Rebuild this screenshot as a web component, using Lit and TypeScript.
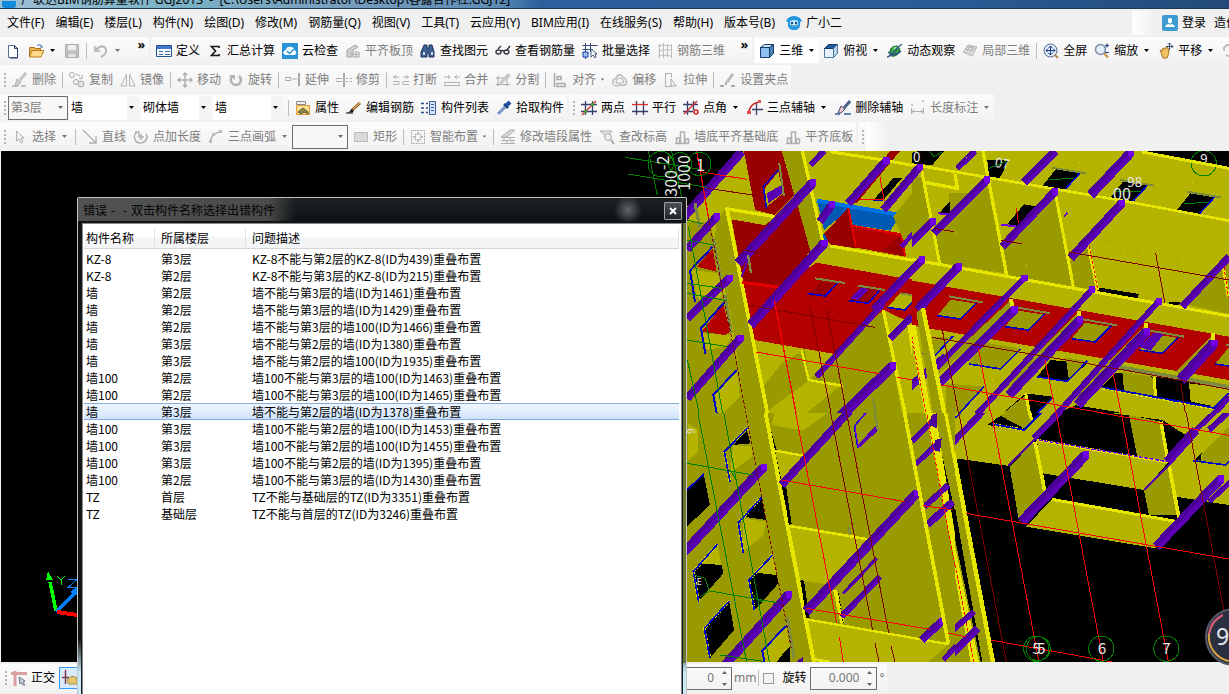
import { LitElement, html, svg, css, nothing } from "lit";
import { customElement, property } from "lit/decorators.js";
import { classMap } from "lit/directives/class-map.js";

/* ---------- icons, each drawn on a 16 x 16 grid ---------- */
const stroke = (d: string, color: string, w = 1) =>
  svg`<path d=${d} fill="none" stroke=${color} stroke-width=${w} />`;
const fill = (d: string, color: string, line = "none") =>
  svg`<path d=${d} fill=${color} stroke=${line} />`;
const G = "#a9a9a9";
const L = "#c9c9c9";

const ICONS: Record<string, unknown> = {
  fresh: svg`${fill("M3.500 2.500h6l3 3v9h-9z", "#fff", "#5b6f94")}${fill("M9.500 2.500v3h3z", "#c5d6ee", "#27406f")}${stroke("M12.500 6v9H5", "#1f3b70", 1)}`,
  open: svg`${fill("M1.500 4.500h5l1 1h5v8h-11z", "#e9b54d", "#a8701a")}${fill("M4 7.500h12l-3 6.500H1.500z", "#ffd98a", "#b87d22")}${stroke("M9 2.500q4-2 5 1.500m-2 0h3", "#3f6db0", 1)}`,
  save: svg`${fill("M1.500 1.500h13v13h-13z", "#c3c3c3", "#adadad")}${fill("M4 2h8v5H4z", "#efefef")}${fill("M4 10h8v4.500H4z", "#e2e2e2", "#b0b0b0")}`,
  undo: svg`${stroke("M4 6c5-5 10-2 9 3q-1 3-5 5", "#b9b9b9", 2)}${fill("M1 2v7h7z", "#bdbdbd")}`,
  define: svg`${fill("M.5 2.500h15v11H.5z", "#f3f8ff", "#28519c")}${fill("M1 3h14v3H1z", "#4378c8")}${stroke("M3 8.500h4m2 0h5M3 11.500h4m2 0h5", "#476aa8", 1)}`,
  sigma: svg`${stroke("M12 5V3.500H4.500L8.500 8l-4 4.500H12V11", "#151515", 1.600)}`,
  cloud: svg`${fill("M0 0h16v16H0z", "#2a93d8")}${fill("M4 12q-4-1-2-4 1-1 2-1 1-4 5-3 3 0 3 3 3 1 2 4-1 1-2 1z", "#fff")}${stroke("M5 8l2.500 2.500L12 6", "#2a93d8", 1.500)}`,
  align: svg`${fill("M2 14V7l8-5 3 2-6 4v6z", "#cfcfcf", G)}${stroke("M8 9h6v5H8zm0 2.500h6m-3-2.500v5", G, 1)}`,
  find: svg`${fill("M4 2h3v3h2V2h3l2 7v5H9v-4H7v4H1V9z", "#3d5f94", "#1e3560")}${fill("M3 9h2v3H3zm8 0h2v3h-2z", "#c6d9f2")}`,
  glasses: svg`${stroke("M1 9a2.500 2 0 1 0 5 0a2.500 2 0 1 0-5 0m8 0a2.500 2 0 1 0 5 0a2.500 2 0 1 0-5 0M6 8q1.500-1 3 0M3 6l3-3m6 4 3-4", "#30343c", 1.400)}`,
  batch: svg`${stroke("M.5 2.500h15M.5 6.500h10M3.500 0v16M8.500 0v9M.5 10.500h6", "#394d78", 1)}${fill("M1 9h5v5H1z", "#9fc1ec", "#1941b0")}${fill("M9 6v8l2-2 2 3 1-1-1-3h2z", "#fff", "#445a80")}`,
  steel3d: svg`${stroke("M1 3l5-1 9 1M1 8l5-1h9M1 13l5-1 9 1M2.500 1v14M6.500 0v15M10.500 1v13M14.500 1v14", "#bdbdbd", 1)}`,
  cube: svg`${fill("M1.500 4.500h9v10h-9z", "#8ec1f0", "#173a68")}${fill("M1.500 4.500l4-3h9l-4 3z", "#cbe5fb", "#173a68")}${fill("M10.500 4.500l4-3v9l-4 4z", "#4c82b8", "#173a68")}`,
  topview: svg`${fill("M1.500 5.500h9v9h-9z", "#e3f1fc", "#54779f")}${fill("M1.500 5.500l4-4h9l-4 4z", "#1e5c9a", "#173a68")}${fill("M10.500 5.500l4-4v9l-4 4z", "#bcd8f1", "#54779f")}`,
  orbit: svg`${fill("M3 8q1-5 7-5 5 3 1 8-5 4-8 1z", "#2ca345", "#116226")}${stroke("M0 14q4-1 8-6t7-7M1 9q6 6 13-1", "#36508c", 1.300)}${fill("M6 5q2-2 4-1L7 7z", "#92e49a")}`,
  local3d: svg`${fill("M1 9l5-7 9 2-5 9z", "#e2e2e2", "#b3b3b3")}${stroke("M3 6l10 2M5 3.500l8.500 2M4 10l5-8M7 11l5-8", "#b3b3b3", 1)}`,
  full: svg`<circle cx="7.500" cy="7.500" r="6.500" fill="#e6f0fc" stroke="#53698c" />${stroke("M3 7.500h9M7.500 3v9M5.500 5L7.500 3l2 2m-4 5 2 2 2-2M5 5.500l-2 2 2 2m5-4 2 2-2 2", "#1b3d85", 1)}${stroke("M12 12l3 3", "#b98a4a", 2)}`,
  zoom: svg`<circle cx="6.500" cy="6.500" r="5" fill="#e3f0fc" stroke="#7c8ea8" stroke-width="1.500" />${stroke("M10 10l4 4.500", "#c79b55", 2.500)}${stroke("M11 2.500h4m-2-2v4m-2 5h4", "#1f4590", 1.200)}`,
  pan: svg`${fill("M2 7l2 1 1-3 2 1 1-2 2 1 1 5-2 5H5z", "#f0c264", "#a97320")}${stroke("M11.500 0v7M8 3.500h7M10 1.500 11.500 0 13 1.500M13.500 2 15 3.500 13.500 5", "#36486d", 1)}`,
  swirl: svg`${stroke("M2 8V5l3-3h8v6M13 10q-4 5-9 2", "#bdbdbd", 2)}`,
  brush: svg`${stroke("M14 1L8 8", "#c4c4c4", 3)}${fill("M5 7l4 3-3 4H3z", "#d0d0d0", "#b0b0b0")}${stroke("M0 14h5m4 0h5", "#b0b0b0", 1.500)}`,
  copy: svg`<circle cx="3" cy="3" r="2.500" fill="none" stroke=${G} /><circle cx="7" cy="10" r="2.500" fill="none" stroke=${G} /><circle cx="12" cy="12" r="3" fill="#e4e4e4" stroke=${G} />${stroke("M7 2l4 2m2-1v4l-3-1", G)}`,
  mirror: svg`${stroke("M6.500 2v12H1zM9.500 2v12H15z", "#b5b5b5", 1)}`,
  move: svg`${stroke("M8 1v14M1 8h14M6 3l2-2 2 2M6 13l2 2 2-2M3 6L1 8l2 2m10-4 2 2-2 2", "#b0b0b0", 1.500)}`,
  rotate: svg`${stroke("M4 4C1 8 4 13 8 13s7-5 3-9", "#b5b5b5", 2.500)}${fill("M1 3h6v5z", "#b5b5b5")}`,
  extend: svg`${stroke("M0 5.500h6v3H0zM8 7h4", G, 1)}${stroke("M14 1v13", G, 2)}`,
  trim: svg`${stroke("M8 1v14", G, 2)}${stroke("M0 6.500h6m-6 3h6m4-3h2m2 0h2m-6 3h2m2 0h2", G, 1)}`,
  cut: svg`${stroke("M0 5h6M3 3L1 5l2 2m7-2h6m-3-2 2 2-2 2M0 9.500h6v3H0m16-3h-6v3h6", "#b0b0b0", 1)}`,
  merge: svg`${stroke("M0 5h6M4 3l2 2-2 2m6-2h6m-3-2-2 2 2 2M0 10.500h16v3H0z", "#b0b0b0", 1)}`,
  split: svg`${stroke("M1 6h12l2-3M1 12.500h14M3 4v10m9-7v7", G, 1)}${stroke("M5 12l9-10", L, 3)}`,
  alignto: svg`${stroke("M2.500 1v14M5 4.500h4v3H5zM5 11.500h8v3H5z", G, 1.500)}`,
  offset: svg`${stroke("M1 12q-1-4 3-6 3-6 7-1 5 3 3 7-2 2-6 1-5 2-7-1z", "#b2b2b2", 1.300)}${stroke("M4 11q0-5 4-5 4 1 4 4-3 2-8 1z", G, 1)}`,
  stretch: svg`${stroke("M2.500 14.500v-13h6v4m-6 9h6", "#b0b0b0", 1)}${stroke("M8 7l5 7H8z", G, 1)}`,
  grip: svg`${stroke("M13 2L7 10", "#bdbdbd", 3)}${stroke("M0 14h4m7 0h4M6 10v3", G, 2)}`,
  props: svg`${fill("M1.500 5.500h13v9h-13z", "#ffdf94", "#e09a35")}${fill("M1.500 1.500h9v3h-9z", "#f0f0f0", "#8a8a8a")}${fill("M3 12l5-4 5 4v2l-4-2-3 2z", "#8a8b4a", "#5b5630")}`,
  pencil: svg`${stroke("M0 13h7", "#222", 1.200)}${stroke("M5 11l9-8", "#8b5a20", 3)}${stroke("M7 9l7-6", "#efcb78", 1)}${fill("M2 13l4-4 2 3z", "#222")}`,
  list: svg`${stroke("M0 3.500h3M0 8h3m-3 4.500h3M5 3.500h2M5 8h2m-2 4.500h2", "#2b4b8a", 1.300)}${fill("M8.500 1.500h6v13h-6z", "#d5e6fa", "#3c5f9e")}${stroke("M10 4.500h3m-3 3h3m-3 3h3", "#3c5f9e", 1)}`,
  picker: svg`${stroke("M2 14L9 7", "#7b98c8", 3)}${stroke("M8 4l4 4", "#183c7c", 2.500)}${stroke("M10 6l4-4", "#1d4fa0", 4)}`,
  twopoint: svg`${stroke("M4.500 1v14M11.500 1v14M0 4.500h16M0 11.500h16", "#36406a", 1.300)}${stroke("M1 15L15 1", "#cf3030", 1.300)}${fill("M3 10h3v3H3zM10 3h3v3h-3z", "#4d9a35")}`,
  parallel: svg`${stroke("M4.500 1v14M11.500 1v14M0 11.500h16", "#36406a", 1.300)}${stroke("M0 4.500h16", "#cf3030", 1.300)}`,
  angle: svg`${stroke("M4.500 1v14M10.500 1v9M0 4.500h15M0 11.500h10", "#36406a", 1.300)}${stroke("M1 14L14 1", "#cf3030", 1.500)}<circle cx="13" cy="12" r="2" fill="none" stroke="#d02020" stroke-width="1.500" />`,
  threepoint: svg`${stroke("M9.500 3v12M5 9.500h11", "#36406a", 1.300)}${stroke("M2 13Q2 4 12 2", "#d02020", 1.500)}${fill("M0 11h4v3H0zM11 0h3v3h-3z", "#e05050")}`,
  eraser: svg`${stroke("M15 1L9 8", "#4c628f", 3)}${fill("M6 6l4 3-4 4H3z", "#f5c6d0", "#3a4a74")}${stroke("M0 14h5m4 0h7", "#345a9e", 1.500)}`,
  dim: svg`${stroke("M1.500 8v6M13.500 8v6M2 11.500h11M4 9.500l-2 2 2 2m7-4 2 2-2 2", "#b0b0b0", 1)}${fill("M1 4h2v2H1zM12 0h2v2h-2z", "#c8c8c8")}`,
  pointer: svg`${fill("M4.500 2v10l2.500-2 2 4 2-1-2-4h3z", "#f3f3f3", "#b0b0b0")}`,
  line: svg`${stroke("M1 1l12 12M7 14h7V7", "#b0b0b0", 1.300)}`,
  pointlen: svg`${stroke("M4 3C-1 7 2 14 7 14s9-5 6-9M8 5v6M5 8h6M2 3h4v4", "#b0b0b0", 1.500)}`,
  arc: svg`${stroke("M3 14Q2 4 13 3", "#b0b0b0", 1.500)}${fill("M1 11h3v3H1zM11 1h3v3h-3zM4 4h3v3H4z", "#bbb")}`,
  rect: svg`${fill("M1.500 3.500h13v9h-13z", "#dadada", "#bcbcbc")}`,
  smart: svg`<path d="M1.500 1.500h13v13h-13z" fill="none" stroke="#a5a5a5" stroke-dasharray="2 1" />${stroke("M8 3v3m0 4v3M3 8h3m4 0h3M5 5l1 1m5-1-1 1M5 11l1-1m5 1-1-1", G, 1.500)}`,
  wallseg: svg`${stroke("M1 8.500h14M1 11.500h14M1 14.500h14M4 9v2m6-2v2M7 12v2m5-2v2", "#b0b0b0", 1)}${fill("M1 8l9-7h5L7 8z", "#d6d6d6", "#b0b0b0")}`,
  elev: svg`${fill("M1 2h12L8 8z", "#e6e6e6", "#b0b0b0")}<circle cx="9" cy="8" r="3.500" fill="#efefef" stroke="#a9a9a9" />${stroke("M12 11l3 4", G, 2)}`,
  base: svg`${stroke("M1 14.500h14M2.500 14V9h3v5m1 0V3h4v11m1 0v-4h3v4", "#b0b0b0", 1.500)}`,
  mascot: svg`${fill("M2 3q6-4 12 0l2 3-2 1q1 8-6 8T2 7L0 6z", "#2196dc")}${fill("M4 6q4-2 8 0 1 6-4 6T4 6z", "#bfe6fa")}${fill("M5 7h2v2H5zm4 0h2v2H9z", "#0d4f80")}${stroke("M5 10q3 3 6 0", "#0d6aa6")}`,
  user: svg`${fill("M2 0h12q2 0 2 2v12q0 2-2 2H2q-2 0-2-2V2q0-2 2-2z", "#3d9bcf")}${fill("M6 4q2-2 4 0v3q-2 3-4 0z", "#fff")}${fill("M3 12q1-3 4-3l1 1 1-1q3 0 4 3z", "#fff")}`,
  ortho: svg`${stroke("M4 1v15", "#dba0a0", 3)}${stroke("M0 3.500h16", "#dba0a0", 3)}${fill("M8 7l6 4-2 1 2 3-2 0-2-2-1 1z", "#c7ced6", "#6b7885")}`,
  snap: svg`${stroke("M4.500 0v14M1 7.500h7", "#7a3d46", 1.500)}${fill("M6 10l5-4 5 2v6H8z", "#e5c66b", "#a98b3c")}`,
};

/* ---------- toolbar model ---------- */
type Item =
  | { kind: "btn"; icon: string; text?: string; off?: boolean; menu?: boolean; on?: boolean; tight?: boolean }
  | { kind: "sep" }
  | { kind: "more" }
  | { kind: "combo"; text: string; size: string; boxed?: boolean };
const b = (icon: string, text = "", flags = ""): Item => ({
  kind: "btn", icon, text,
  off: flags.includes("off"), menu: flags.includes("menu"), on: flags.includes("active"), tight: flags.includes("tight"),
});
const sep: Item = { kind: "sep" };
const combo = (text: string, size: string, boxed = false): Item => ({ kind: "combo", text, size, boxed });

interface Bar { grip?: boolean; items: Item[]; grow?: boolean; tail?: boolean }
const ROWS: Bar[][] = [
  [
    { items: [b("fresh"), b("open", "", "menu"), b("save", "", "off"), sep, b("undo", "", "off menu"), { kind: "more" }] },
    { items: [b("define", "定义"), b("sigma", "汇总计算"), b("cloud", "云检查"), b("align", "平齐板顶", "off"), b("find", "查找图元"), b("glasses", "查看钢筋量"), b("batch", "批量选择"), b("steel3d", "钢筋三维", "off"), { kind: "more" }] },
    { grow: true, items: [b("cube", "三维", "menu active"), b("topview", "俯视", "menu"), b("orbit", "动态观察"), b("local3d", "局部三维", "off"), sep, b("full", "全屏"), b("zoom", "缩放", "menu"), b("pan", "平移", "menu"), b("swirl", "", "off")] },
  ],
  [
    { grip: true, items: [b("brush", "删除", "off"), sep, b("copy", "复制", "off"), b("mirror", "镜像", "off"), sep, b("move", "移动", "off"), b("rotate", "旋转", "off"), sep, b("extend", "延伸", "off"), b("trim", "修剪", "off"), sep, b("cut", "打断", "off"), b("merge", "合并", "off"), b("split", "分割", "off"), sep, b("alignto", "对齐", "off menu tight"), b("offset", "偏移", "off"), b("stretch", "拉伸", "off"), sep, b("grip", "设置夹点", "off")] },
  ],
  [
    { grip: true, items: [combo("第3层", "m", true), combo("墙", "l"), combo("砌体墙", "l"), combo("墙", "l"), sep, b("props", "属性"), b("pencil", "编辑钢筋"), b("list", "构件列表"), b("picker", "拾取构件")] },
    { grip: true, items: [b("twopoint", "两点"), b("parallel", "平行"), b("angle", "点角", "menu"), b("threepoint", "三点辅轴", "menu"), b("eraser", "删除辅轴"), b("dim", "长度标注", "off menu")] },
  ],
  [
    { grip: true, items: [b("pointer", "选择", "off menu"), sep, b("line", "直线", "off"), b("pointlen", "点加长度", "off"), b("arc", "三点画弧", "off menu"), combo("", "s", true), b("rect", "矩形", "off"), sep, b("smart", "智能布置", "off menu tight"), sep, b("wallseg", "修改墙段属性", "off"), b("elev", "查改标高", "off"), b("base", "墙底平齐基础底", "off"), b("base", "平齐底板", "off")] },
    { grip: true, tail: true, items: [] },
  ],
];

@customElement("tool-strip")
class ToolStrip extends LitElement {
  @property({ attribute: false }) bars: Bar[] = [];

  static styles = css`
    :host { display: flex; gap: 2px; overflow: hidden; }
    .bar { display: flex; flex: none; align-items: center; padding: 0 0 0 1px; border-radius: 2px;
      background: linear-gradient(#fcfcfc, #f1f1f1); }
    .gripped { padding-left: 4px; }
    .grow { flex: 1 0 auto; }
    .grip { width: 2px; height: 14px; margin-right: 2px; flex: none;
      background: repeating-linear-gradient(#b5b5b5 0 2px, transparent 2px 4px); }
    .tail { width: 24px; height: 100%; background: linear-gradient(90deg, #fff, #efefef); }
    button { display: flex; align-items: center; gap: 4px; height: 24px; padding: 0 3px 0 4px; border: 0;
      background: none; color: #000; font: inherit; white-space: nowrap; }
    button.off { color: #7d7d7d; }
    button.on { background: #fff; }
    button svg { flex: none; }
    .arrow { width: 7px; height: 4px; margin: 0 1px; }
    .tight .arrow { width: 5px; margin: 0; }
    .sep { width: 1px; height: 16px; margin: 0 2px 0 3px; background: #bdbdbd; }
    .more { box-sizing: border-box; width: 24px; padding-right: 4px; margin-bottom: 12px; font-weight: bold; text-align: right; }
    .combo { position: relative; display: flex; align-items: center; margin-right: 2px; background: #fff; }
    .combo svg { position: absolute; right: 4px; pointer-events: none; }
    select { appearance: none; height: 24px; margin: 0; padding: 0 0 0 2px; border: 0; border-radius: 0;
      background: linear-gradient(90deg, #fff calc(100% - 12px), #f4f4f4 0); color: #000; font: inherit; }
    .l select { width: 70px; }
    .m select { width: 60px; }
    .s select { width: 56px; }
    .boxed { margin-right: 1px; }
    .boxed select { border: 1px solid #6d6d6d; color: #7d7d7d; background: #f7f7f7; }
  `;

  private item(it: Item) {
    if (it.kind === "sep") return html`<span class="sep"></span>`;
    if (it.kind === "more") return html`<span class="more">»</span>`;
    if (it.kind === "combo")
      return html`<span class=${classMap({ combo: true, [it.size]: true, boxed: !!it.boxed })}>
        <select aria-label=${it.text || "弧半径"}><option>${it.text}</option></select>
        <svg width="7" height="4" viewBox="0 0 7 4"><path d="M1 0h5L3.500 3z" fill=${it.boxed ? "#6d6d6d" : "#000"} /></svg>
      </span>`;
    return html`<button class=${classMap({ off: !!it.off, on: !!it.on, tight: !!it.tight })} aria-label=${it.text || it.icon}>
      <svg width="16" height="16" viewBox="0 0 16 16">${ICONS[it.icon]}</svg>${it.text || nothing}
      ${it.menu ? html`<svg class="arrow" viewBox="0 0 7 4"><path d="M1 0h5L3.500 3z" fill=${it.off ? "#777" : "#000"} /></svg>` : nothing}
    </button>`;
  }

  render() {
    return this.bars.map((bar) => html`<div class=${classMap({ bar: true, grow: !!bar.grow, gripped: !!bar.grip })}>
      ${bar.grip ? html`<span class="grip"></span>` : nothing}
      ${bar.items.map((i) => this.item(i))}
      ${bar.tail ? html`<span class="tail"></span>` : nothing}
    </div>`);
  }
}

/* ---------- building model, four tiles drawn at three units per pixel ---------- */
const Y = "#b3b300", D = "#999900", H = "#e6e600", R = "#b30000", RD = "#990000";
const P = "#5900b3", PD = "#4d0099", PC = "#7300e6", K = "#000", B = "#0000c8", AX = "#ff0000", AD = "#800000", GR = "#008000", W = "#7d8c3c";

const p = (points: string, color: string) => svg`<polygon points=${points} fill=${color} />`;
const l = (points: string, color: string, w = 3, dash = "") =>
  svg`<polyline points=${points} fill="none" stroke=${color} stroke-width=${w} stroke-dasharray=${dash || nothing} />`;
const beam = (x1: number, y1: number, x2: number, y2: number, w = 24, cap = true) => svg`
  <line x1=${x1} y1=${y1} x2=${x2} y2=${y2} stroke=${PD} stroke-width=${w} />
  <line x1=${x1 + w / 6} y1=${y1 + w / 6} x2=${x2 + w / 6} y2=${y2 + w / 6} stroke=${P} stroke-width=${w / 1.9} />
  ${cap ? svg`<rect x=${x2 - 8} y=${y2 - 11} width="19" height="20" fill=${PC} />` : nothing}`;
const hole = (pts: string, inner: string, edge: string) => svg`${p(pts, inner)}${l(edge, H, 8, "6 4")}${l(edge, B, 5)}`;
const t = (x: number, y: number, s: string, size: number, turn = 0) =>
  svg`<text x=${x} y=${y} font-size=${size} fill="#e8e8e8" transform=${turn ? `rotate(${turn} ${x} ${y})` : nothing}>${s}</text>`;
const ring = (x: number, y: number, r = 38) =>
  svg`<circle cx=${x} cy=${y} r=${r} fill="none" stroke=${GR} stroke-width="3" />`;

const NORTH_WEST = svg`
  ${p("262,170 430,3 936,3 936,789 262,789", Y)}
  ${p("262,215 330,215 395,560 450,789 262,789", D)}
  ${p("275,360 360,370 365,440 320,460 290,440", Y)}${p("305,550 400,555 375,590 320,600", Y)}${p("345,735 410,660 420,740 370,789 350,789", Y)}
  ${p("290,350 338,295 350,365", R)}${p("305,545 370,462 390,545 375,555", R)}
  ${p("432,3 545,3 583,135 525,195 465,180", RD)}
  ${p("495,115 535,65 550,130 500,170", Y)}${p("500,130 545,105 548,130 505,160", P)}
  ${l("535,60 490,110 500,178", B, 5)}${l("538,40 552,138", W, 6)}
  ${p("395,208 497,226 590,130 640,290 455,530", RD)}
  ${p("545,3 605,3 668,270 630,300 583,130", D)}
  ${l("607,3 668,272", H, 10)}
  ${p("390,182 525,200 497,225 393,208", Y)}
  ${p("427,400 540,412 650,338 936,388 936,520 850,480 705,612 462,570", R)}
  ${p("685,290 955,335 910,385 650,338", Y)}
  ${p("650,148 908,190 870,242 760,225 745,180 672,240", "#0059b3")}${l("650,152 908,196", "#0073e6", 12)}
  ${p("668,255 705,225 706,268 675,282", "#0059b3")}
  ${p("672,250 745,175 768,295 690,283", RD)}${p("755,225 905,250 915,320 765,292", R)}${p("905,255 915,318 845,302", RD)}
  ${l("745,175 768,292", "#e60000", 6)}${l("760,228 905,254 915,318", "#e60000", 6)}
  ${p("880,200 936,130 936,260 915,280", D)}
  ${p("880,85 905,85 850,150 820,150", K)}${l("820,150 848,150", B, 4)}
  ${p("870,3 900,3 770,160 750,160", RD)}
  ${p("470,575 610,600 628,690 500,785 462,580", Y)}${p("628,690 730,705 620,789 510,789", Y)}
  ${p("545,640 615,600 628,690 500,785 485,715", D)}
  ${p("705,612 850,480 905,789 620,789 730,700 630,690", D)}
  ${p("625,440 660,395 712,400 680,438", RD)}${p("750,450 790,410 835,420 805,458", RD)}${p("750,445 785,412 808,418 775,450", P)}
  ${p("865,470 900,430 950,440 915,478", Y)}
  ${l("645,385 735,399", W, 6)}${l("775,407 855,420", W, 6)}${l("900,430 957,438", W, 6)}
  ${l("622,430 675,438 712,400", B, 5)}${l("748,452 805,460 838,422", B, 5)}${l("862,472 915,480 950,442", B, 5)}
  ${p("378,172 350,215 345,260 370,400 390,480 438,789 502,789", D)}
  ${l("380,172 502,789", H, 11)}${l("376,176 525,200", H, 10)}
  ${l("427,397 540,412", "#e60000", 9)}${l("690,288 957,334", H, 9)}
  ${l("605,600 626,690 730,708", H, 7)}${l("850,480 915,789", H, 10)}
  ${l("690,5 850,30 936,46", H, 9)}
  ${beam(240, 215, 425, 5, 26, false)}${beam(262, 298, 350, 200)}${beam(262, 505, 388, 385)}${beam(262, 745, 420, 565)}
  ${beam(415, 340, 638, 98, 28)}${beam(452, 525, 672, 280, 28)}${beam(632, 45, 672, 3, 18, false)}
  ${beam(660, 215, 695, 165, 24)}${beam(745, 160, 858, 32)}${beam(850, 180, 958, 52)}
  ${beam(650, 680, 850, 460, 18, false)}${beam(820, 480, 965, 330, 24)}${beam(710, 810, 878, 648, 30)}${beam(870, 565, 936, 500, 20, false)}
  ${l("905,290 940,250", P, 14)}${l("425,380 445,325", P, 6)}
  ${p("922,525 950,525 960,700 940,650", H)}
  ${l("338,290 270,362 285,455", B, 6)}${l("372,458 303,535 316,612", B, 6)}${l("410,660 340,735 352,800", B, 6)}
  ${l("340,265 362,385", W, 9)}${l("375,435 394,548", W, 9)}${l("285,160 300,235", W, 9)}${l("444,315 453,368", W, 7)}${l("818,745 828,789", W, 6)}
  ${l("290,3 325,200", AX, 4)}${l("300,65 440,88", AX)}${l("322,115 480,138", AD)}${l("325,200 440,800", AD, 3, "10 7")}
  ${l("415,298 490,310", AD)}${l("445,465 825,532", AD)}${l("630,470 695,800", AD)}${l("680,478 742,800", AD)}
  ${l("468,606 838,671", AX)}${l("523,450 590,800", AX, 4)}${l("840,80 852,150 780,148", AX)}${l("890,682 950,692", AX)}
  ${l("75,22 300,58", GR)}${l("85,72 320,112", GR)}${l("145,3 172,135", GR)}${l("215,3 245,140", GR)}${l("265,230 370,800", GR)}
  ${l("262,210 310,222", GR)}${l("262,270 340,285", GR)}${l("262,400 365,415", GR)}${l("262,430 380,452", GR)}${l("262,570 380,590", GR)}${l("262,630 300,800", GR)}
  ${ring(182, 42)}${ring(240, 42, 34)}${ring(298, 42, 35)}
  ${t(288, 62, "1", 48)}${t(232, 140, "300", 48, -90)}${t(270, 122, "1000", 48, -90)}${t(206, 60, "-2", 48, -90)}`;

const skyWindow = (x: number, y: number) => svg`
  ${p(`${x},${y} ${x + 40},${y - 50} ${x + 112},${y - 38} ${x + 68},${y + 12}`, K)}
  ${l(`${x + 112},${y - 38} ${x + 68},${y + 10}`, B, 5)}${l(`${x + 30},${y - 55} ${x + 132},${y - 38}`, W, 6)}
  ${l(`${x + 20},${y - 20} ${x + 95},${y - 22}`, GR)}`;
const floorWindow = (x: number, y: number) => svg`
  ${p(`${x},${y} ${x + 40},${y - 48} ${x + 118},${y - 36} ${x + 70},${y + 10}`, D)}
  ${l(`${x},${y} ${x + 70},${y + 10} ${x + 118},${y - 38}`, B, 5)}${l(`${x + 34},${y - 58} ${x + 136},${y - 40}`, W, 6)}`;

const NORTH_EAST = svg`
  ${p("0,3 960,3 960,789 0,789", Y)}${p("700,3 960,3 960,52", K)}
  ${p("0,10 30,3 105,3 70,45 0,40", K)}
  ${p("235,30 300,32 272,84 240,80", K)}
  ${skyWindow(400, 108)}${skyWindow(602, 145)}${skyWindow(804, 180)}
  ${t(612, 150, "00", 48)}${t(655, 112, "98", 40)}${t(256, 50, "07", 40, 10)}${t(12, 36, "0", 40)}${t(874, 42, "9", 40)}${ring(884, 40)}
  ${p("40,85 75,230 0,290 0,70", D)}${p("235,95 290,370 92,338 75,230", D)}${p("435,135 492,410 297,375 280,290", D)}${p("538,290 565,420 497,410 485,330", D)}
  ${p("840,465 960,330 960,492", D)}${p("120,130 180,130 120,200", D)}
  ${p("90,190 122,155 122,192", K)}${p("295,222 345,163 385,170 320,232", K)}
  ${l("88,190 125,194", PC, 6)}${l("275,224 325,230", PC, 6)}
  ${p("0,390 960,560 960,690 0,525", R)}
  ${p("0,325 960,495 960,556 0,386", Y)}
  ${p("565,412 690,432 685,444 570,430", K)}${p("780,455 820,458 800,468 778,464", K)}
  ${p("0,530 960,700 960,789 0,789", Y)}
  ${floorWindow(85, 497)}${floorWindow(288, 530)}${floorWindow(488, 566)}${floorWindow(690, 600)}${floorWindow(918, 642)}
  ${p("690,590 735,548 765,552 725,602", P)}
  ${p("70,560 130,560 80,615 50,610", D)}${l("40,610 80,615 132,558", B, 5)}
  ${p("180,640 230,578 330,595 275,655", D)}${l("180,642 275,657 335,597", B, 5)}
  ${p("385,680 425,630 535,640 475,692", K)}${p("470,622 535,634 480,690", D)}${l("383,680 475,694 535,632", B, 5)}
  ${p("580,710 620,668 920,700 900,775", K)}${p("640,665 730,680 740,738 645,722", D)}${p("840,700 960,715 920,770 845,755", Y)}
  ${l("735,682 740,738", H, 9)}${l("580,712 915,774 960,730", B, 6)}${l("580,716 915,778", H, 4, "8 5")}
  ${p("260,808 350,730 430,740 370,808", K)}${p("270,800 350,735 365,800", D)}${l("350,730 365,808", H, 9)}${l("430,745 372,800", B, 5)}
  ${p("450,789 500,765 640,789", K)}
  ${p("630,645 960,705 960,718 635,660", W)}
  ${p("110,700 225,710 140,800 110,800", D)}${l("225,710 140,802 110,800", B, 5)}
  ${l("0,42 235,82 640,152 960,212", H, 8)}${l("222,3 293,375", H, 10)}${l("38,60 92,340", H, 9)}${l("440,135 493,410", H, 9)}
  ${l("45,97 145,115 138,72", H, 10)}${l("0,327 960,498", H, 9)}${l("700,6 960,55", H, 9)}
  ${l("538,288 566,422", H, 9)}${l("540,288 567,422", AX, 3, "9 6")}${l("943,350 958,440", H, 9)}${l("945,350 958,440", AX, 3, "9 6")}
  ${p("300,455 312,455 312,480 90,670 90,650", D)}${p("505,490 512,500 300,735 292,700", D)}${p("705,530 712,540 505,770 498,735", D)}${p("905,560 915,575 820,680 800,665", D)}
  ${l("307,448 309,480", H, 12)}${l("510,483 511,510", H, 12)}${l("710,518 712,545", H, 12)}${l("912,550 914,580", H, 12)}
  ${beam(-77, 180, 31, 52)}${beam(0, 285, 70, 215, 24)}${beam(75, 250, 233, 90)}${beam(280, 290, 437, 125)}${beam(485, 325, 638, 160, 26)}
  ${beam(145, 55, 198, 3, 18, false)}${beam(345, 98, 440, 3, 26, false)}${beam(545, 135, 665, 8, 28)}${beam(820, 470, 960, 320, 22, false)}
  ${beam(-107, 480, 38, 330)}${beam(25, 480, 148, 350, 26)}${beam(80, 655, 345, 385, 18)}${beam(90, 700, 315, 480, 26)}
  ${beam(190, 808, 548, 420, 18)}${beam(300, 735, 512, 510, 28)}${beam(430, 808, 748, 455, 18)}${beam(505, 765, 712, 545, 30)}${beam(815, 690, 915, 580, 32)}
  ${beam(-10, 720, 110, 620, 24, false)}${beam(900, 810, 960, 740, 18, false)}${l("465,200 475,188", P, 5)}
  ${p("0,525 20,525 65,780 70,808 50,808", H)}${l("2,525 55,808", AX, 3, "10 6")}
  ${p("22,490 38,475 110,808 75,808", D)}${l("42,475 110,808", H, 13)}
  ${l("75,235 135,245", AD)}${l("275,270 340,282", AD)}${l("480,306 960,390", AD)}${l("740,310 768,460", AD)}${l("322,175 328,218", AX)}
  ${l("70,562 530,640 690,668 960,718", AD)}${l("100,540 152,808", AD)}${l("815,700 832,808", AD)}
  ${l("208,595 248,808", AX)}${l("408,630 445,808", AX)}${l("612,668 640,808", AX)}${l("95,705 400,757 690,808", AX)}
  ${l("60,3 75,20 100,5", GR)}${l("240,55 290,35", GR)}
  ${[[170, 20], [510, 35], [745, 85], [850, 95], [590, 290], [700, 300], [820, 325], [140, 250], [350, 345], [250, 690], [450, 720], [645, 300]].map(([x, y]) => svg`<rect x=${x} y=${y} width="3" height="3" fill=${H} />`)}`;

const SOUTH_WEST = svg`
  ${p("0,0 840,0 840,756 0,756", D)}
  ${p("200,60 212,100 160,105", K)}${p("160,105 215,110 215,140 150,190", Y)}${hole("0,0", D, "202,55 133,125 150,215")}
  ${p("20,240 72,195 90,285 20,350", K)}${l("20,240 72,192", B, 5)}${p("24,40 55,60 55,125 24,150", Y)}
  ${p("190,320 245,265 258,330", K)}${p("190,325 258,335 250,375 190,425", Y)}${hole("0,0", D, "245,262 175,338 190,428")}
  ${p("42,485 112,405 130,490 60,570", K)}${p("112,405 125,465 60,460", Y)}${hole("0,0", D, "112,403 40,485 56,575")}
  ${p("210,510 278,440 295,520 225,600", K)}${p("278,437 290,495 225,488", Y)}${hole("0,0", D, "278,435 207,510 223,600")}
  ${hole("75,655 148,575 162,660 92,742", K, "148,573 73,655 90,745")}
  ${p("250,720 318,650 330,710 300,756 255,756", Y)}${p("310,730 330,710 330,756 290,756", K)}${l("318,648 247,722 253,756", B, 6)}
  ${p("285,0 455,0 370,62 275,45", Y)}${p("455,0 500,0 390,120 290,118", D)}
  ${p("268,45 290,120 380,590 390,625 375,600", K)}${p("285,122 372,138 305,215", Y)}${p("325,350 570,390 460,525 360,512", Y)}
  ${p("305,215 670,275 575,388 330,348", D)}${p("380,630 805,703 745,756 405,756", Y)}
  ${p("205,0 252,0 400,756 345,756", D)}
  ${l("255,0 402,756", H, 12)}${l("285,122 372,137", H, 7)}${l("325,347 570,389", H, 8)}${l("380,628 808,703", H, 7)}${l("402,748 450,756", H, 8)}
  ${l("465,540 488,640", H, 12)}${l("475,550 490,640", K, 3, "6 5")}
  ${p("362,510 372,512 388,625 378,625", K)}${p("308,228 318,228 335,342 326,342", K)}
  ${beam(0, 440, 250, 172, 28)}${beam(135, 765, 325, 555, 28)}${beam(305, 225, 520, -10, 24, false)}${beam(378, 605, 710, 250, 28)}
  ${beam(490, 550, 590, 445, 10, false)}${beam(485, 620, 600, 500, 18, false)}${beam(725, 690, 785, 634, 24)}${beam(790, 750, 845, 690, 16, false)}
  ${p("532,105 590,45 590,65 540,112", P)}${l("565,0 523,48 533,115", B, 4)}${l("565,2 525,48 535,115", PC, 3)}${l("582,0 594,62", W, 7)}
  ${l("322,622 342,745", W, 9)}${l("505,352 510,372", W, 7)}${p("350,756 370,738 370,756", PD)}
  ${p("735,0 765,0 845,500 845,560", H)}${p("765,0 800,0 840,200 840,430", D)}${p("785,130 840,370 840,430 830,400", K)}${l("795,0 845,260", H, 10)}
  ${beam(695, 95, 765, 25, 16, false)}${beam(708, 162, 778, 95, 16, false)}${beam(733, 290, 805, 225, 18, false)}${beam(742, 345, 818, 275, 22, false)}
  ${p("755,15 770,10 770,55 750,45", PD)}${p("765,90 785,85 780,125 760,120", PD)}
  ${l("738,0 842,560", AX, 3, "10 6")}${l("672,0 805,700", H, 11)}
  ${l("345,0 470,640", AX)}${l("478,680 490,756", AX)}${l("450,0 578,660", AD)}${l("498,0 626,668", AD)}${l("585,700 597,756", AD)}${l("633,708 645,756", AD)}
  ${l("305,210 675,275", AX)}${l("730,287 820,300", AX)}${l("378,595 750,658", AX)}${l("805,670 845,676", AX)}${l("195,0 335,720", AD, 3, "9 7")}
  ${l("52,0 200,756", GR)}${l("130,0 268,756", GR)}${l("22,160 220,195", GR)}${l("90,543 292,578", GR)}${l("120,735 250,754", GR)}${l("42,495 75,505 88,543 60,560", GR)}
  ${l("150,180 170,210", GR)}${l("220,555 250,580", GR)}${t(50, 525, "E", 26)}${t(44, 72, "9", 30, -90)}`;

const SOUTH_EAST = svg`
  ${p("0,0 840,0 840,756 0,756", K)}
  ${p("0,0 350,0 180,168 0,142", Y)}${p("115,45 150,20 230,0 280,5 225,60", K)}${p("150,15 235,0 250,30 225,55", D)}
  ${p("415,0 840,0 840,160 640,30", Y)}${p("540,15 635,35 655,160 565,140", D)}
  ${p("265,92 655,160 585,240 270,188", Y)}${p("255,95 285,245 210,335 182,170", D)}
  ${p("310,268 680,335 620,415 230,350", Y)}${p("660,165 690,315 600,315 585,240", D)}
  ${p("660,160 760,60 840,50 840,285 680,260", Y)}${p("760,130 840,50 840,165 760,152", D)}${p("735,150 758,130 755,152", K)}
  ${l("240,0 248,30", H, 10)}${l("636,35 658,160", H, 10)}${l("258,95 287,242", H, 11)}${l("660,165 690,325", H, 11)}
  ${l("308,268 680,334", H, 9)}${l("265,90 655,157", H, 7)}${l("270,90 655,155", PC, 4, "12 4")}
  ${l("130,42 225,60 280,5", H, 8, "7 3")}${l("130,42 225,60 280,5", B, 5)}${l("0,20 20,22 40,5", B, 5)}${l("733,152 830,165 845,148", B, 5)}
  ${beam(0, 110, 110, -5, 20, false)}${beam(178, 168, 258, 88, 6, false)}${beam(255, 85, 345, -8, 20, false)}${beam(218, 335, 410, 135, 30)}
  ${beam(585, 240, 665, 160, 8, false)}${beam(655, 155, 740, 60, 28, false)}${beam(730, 70, 810, -5, 16, false)}${beam(780, 60, 845, 0, 18, false)}
  ${beam(622, 410, 815, 207, 28)}${beam(780, 275, 845, 215, 16, false)}
  ${p("0,75 110,650 100,756 0,756", D)}${p("0,320 90,756 65,756 0,400", H)}
  ${p("0,60 0,210 120,756 95,756 0,300", K)}${p("0,60 10,90 125,756 100,756 0,190", D)}${l("0,60 132,756", H, 13)}
  ${l("0,370 75,756", AX, 3, "10 6")}${beam(0, 670, 75, 605, 18, false)}${beam(0, 740, 85, 655, 24, false)}
  ${l("28,0 172,756", AD)}${l("125,0 270,756", AX)}${l("320,0 463,756", AX)}${l("515,0 658,756", AX)}${l("710,0 830,630", AD)}
  ${l("50,310 840,447", AX)}${l("125,690 490,756", AX)}${l("405,0 840,76", AX)}${l("0,670 50,680", AX)}
  ${ring(262, 716, 38)}${ring(268, 716, 36)}${ring(457, 716)}${ring(652, 716)}
  ${t(250, 733, "5", 46)}${t(264, 733, "5", 46)}${t(446, 733, "6", 46)}${t(640, 733, "7", 46)}`;

@customElement("model-view")
class ModelView extends LitElement {
  static styles = css`
    :host { display: block; overflow: hidden; background: #000; }
    svg.scene { display: block; width: 100%; height: 100%; shape-rendering: crispEdges; }
    text { font-family: "Noto Sans CJK SC", sans-serif; }
  `;
  render() {
    return html`<svg class="scene" viewBox="1 151 1228 511" preserveAspectRatio="xMaxYMin slice" role="img" aria-label="三维模型">
      <svg x="600" y="151" width="312" height="262" viewBox="0 3 936 786">${NORTH_WEST}</svg>
      <svg x="912" y="151" width="317" height="262" viewBox="9 3 951 786">${NORTH_EAST}</svg>
      <svg x="680" y="413" width="275" height="249" viewBox="0 9 825 747">${SOUTH_WEST}</svg>
      <svg x="955" y="413" width="274" height="249" viewBox="18 9 822 747">${SOUTH_EAST}</svg>
      <path d="M56 611L50 582" stroke="#00ff00" stroke-width="3.500" />
      <path d="M48 571l5 9h-7z" fill="#00ff00" />
      <path d="M57 576l4 4 4-4M61 580v5" stroke="#00ff00" fill="none" />
      <path d="M56 612L76 592" stroke="#0080ff" stroke-width="4" /><path d="M70 592l8-6v10z" fill="#0080ff" />
      <path d="M68 579.500h9L68 587.500h9" stroke="#0080ff" fill="none" />
      <path d="M57 612L84 616" stroke="#ff0000" stroke-width="4" />
    </svg>`;
  }
}

/* ---------- error list window ---------- */
const ERRORS: [string, string, string][] = [
  ["KZ-8", "第3层", "KZ-8不能与第2层的KZ-8(ID为439)重叠布置"],
  ["KZ-8", "第2层", "KZ-8不能与第3层的KZ-8(ID为215)重叠布置"],
  ["墙", "第2层", "墙不能与第3层的墙(ID为1461)重叠布置"],
  ["墙", "第2层", "墙不能与第3层的墙(ID为1429)重叠布置"],
  ["墙", "第2层", "墙不能与第3层的墙100(ID为1466)重叠布置"],
  ["墙", "第3层", "墙不能与第2层的墙(ID为1380)重叠布置"],
  ["墙", "第3层", "墙不能与第2层的墙100(ID为1935)重叠布置"],
  ["墙100", "第2层", "墙100不能与第3层的墙100(ID为1463)重叠布置"],
  ["墙100", "第2层", "墙100不能与第3层的墙100(ID为1465)重叠布置"],
  ["墙", "第3层", "墙不能与第2层的墙(ID为1378)重叠布置"],
  ["墙100", "第3层", "墙100不能与第2层的墙100(ID为1453)重叠布置"],
  ["墙100", "第3层", "墙100不能与第2层的墙100(ID为1455)重叠布置"],
  ["墙100", "第3层", "墙100不能与第2层的墙(ID为1395)重叠布置"],
  ["墙100", "第2层", "墙100不能与第3层的墙(ID为1430)重叠布置"],
  ["TZ", "首层", "TZ不能与基础层的TZ(ID为3351)重叠布置"],
  ["TZ", "基础层", "TZ不能与首层的TZ(ID为3246)重叠布置"],
];

@customElement("error-window")
class ErrorWindow extends LitElement {
  static styles = css`
    :host { display: flex; flex-direction: column; box-sizing: border-box; padding: 0 4px;
      border: 1px solid #c3c3c3; border-bottom: 0; border-radius: 2px 2px 0 0;
      background:
        radial-gradient(circle at 550px 12px, #60666a 0, transparent 14px),
        linear-gradient(90deg, #606060cc 0, #565656cc 190px, transparent 218px) 0 0 / 100% 23px no-repeat,
        linear-gradient(90deg, transparent 99%, #6a7530 99%) 0 25px / 100% 440px no-repeat,
        linear-gradient(#1c2022 0, #0e1214 24px, #111 440px, #c8ecf8 475px); }
    header { display: flex; flex: none; align-items: center; justify-content: space-between; height: 25px; padding-left: 1px; }
    h1 { margin: 0; font: 12px/16px "DejaVu Sans", "Noto Sans CJK SC", sans-serif; color: #050505; white-space: pre; }
    button { display: grid; place-items: center; width: 18px; height: 18px; padding: 0; border: 1px solid #9da3a6;
      border-radius: 1px; background: linear-gradient(#4a4f51, #202426); }
    .body { flex: 1; padding: 4px 2px 0 1px; border: 1px solid #888; border-bottom: 0; background: #fff;
      box-shadow: 0 0 0 1px #16191a; overflow: hidden; }
    table { width: 100%; border-collapse: separate; border-spacing: 0; table-layout: fixed; font-size: 12px; }
    th, td { overflow: hidden; padding: 0 0 0 6px; text-align: left; font-weight: normal; white-space: nowrap; }
    th { height: 20px; border-right: 1px solid #e2e3e5; border-bottom: 1px solid #d5d5d5;
      background: linear-gradient(#fff 45%, #f4f5f7 45%); }
    th:first-child, td:first-child { width: 68px; padding-left: 2px; }
    th:nth-child(2), td:nth-child(2) { width: 84px; }
    td { height: 15px; border: 1px solid transparent; border-width: 1px 0; line-height: 15px; }
    tbody::before { content: ""; display: block; height: 1px; }
    .sel td { border-color: #84acdd; background: linear-gradient(#f0f6fe, #cfe3fb); }
  `;
  render() {
    return html`
      <header>
        <h1>错误 -  - 双击构件名称选择出错构件</h1>
        <button aria-label="关闭"><svg width="8" height="8" viewBox="0 0 8 8"><path d="M1 1l6 6M7 1L1 7" stroke="#fff" stroke-width="2" /></svg></button>
      </header>
      <div class="body">
        <table>
          <thead><tr><th>构件名称</th><th>所属楼层</th><th>问题描述</th></tr></thead>
          <tbody>
            ${ERRORS.map((row, i) => html`<tr class=${classMap({ sel: i === 9 })}>${row.map((c) => html`<td>${c}</td>`)}</tr>`)}
          </tbody>
        </table>
      </div>`;
  }
}

const MENU = ["文件(F)", "编辑(E)", "楼层(L)", "构件(N)", "绘图(D)", "修改(M)", "钢筋量(Q)", "视图(V)", "工具(T)", "云应用(Y)", "BIM应用(I)", "在线服务(S)", "帮助(H)", "版本号(B)"];

@customElement("app-root")
class AppRoot extends LitElement {
  static styles = css`
    :host { position: relative; display: grid; grid-template-rows: 9px 28px 28px 29px 28px 29px 1fr 32px;
      grid-template-columns: minmax(0, 1fr); height: 100vh; overflow: hidden; background: #f0f0f0; color: #000;
      font: 12px/16px "Noto Sans", "Noto Sans CJK SC", sans-serif; }
    .title { display: flex; align-items: flex-end; gap: 5px; overflow: hidden; padding-left: 2px; white-space: pre;
      border-bottom: 1px solid #203a55; box-sizing: border-box;
      background: linear-gradient(90deg, #9dbfd4 0, #79b1c4 180px, #7aa0c0 330px, #5b8bb4 500px, #2b609c 540px, #2a5d98 75%, #234a78); }
    .logo { width: 14px; height: 7px; border-radius: 0 0 3px 3px; background: #128bdc; flex: none; }
    .menu { display: flex; align-items: center; gap: 11px; padding-left: 7px; overflow: hidden; white-space: nowrap; }
    .menu a { flex: none; color: inherit; text-decoration: none; }
    .menu .helper { display: flex; align-items: center; gap: 4px; }
    .account { display: flex; flex: none; align-items: center; gap: 4px; height: 24px; margin-left: auto; width: 97px; }
    .account a:last-child { margin-left: 4px; }
    .account svg { flex: none; }
    .fade { flex: none; width: 24px; height: 24px; margin-right: 2px; background: linear-gradient(90deg, #fff, #efefef); }
    model-view { min-height: 0; margin-left: 1px; }
    .status { display: grid; grid-template-columns: 680px auto 1fr; align-items: center; }
    .left, .right { display: flex; align-items: center; height: 28px; background: linear-gradient(#fcfcfc, #f1f1f1); }
    .left { width: 120px; padding-left: 5px; gap: 2px; }
    .right { gap: 2px; color: #777; padding-right: 2px; }
    .grip { width: 2px; height: 14px; background: repeating-linear-gradient(#b5b5b5 0 2px, transparent 2px 4px); }
    .ortho, .snap { display: flex; align-items: center; gap: 4px; height: 22px; padding: 0 2px; border: 0; background: none; font: inherit; }
    .snap { border: 1px solid #3399ff; background: #d8eafc; padding: 0 1px; }
    .spin { display: flex; align-items: center; height: 21px; border: 1px solid #6d6d6d; padding-right: 4px; }
    .spin input { width: 33px; padding: 0; border: 0; background: none; color: #777; font: inherit; text-align: right; }
    .spin svg { margin-left: 8px; }
    .wide input { width: 48px; }
    .vr { width: 1px; height: 16px; background: #bdbdbd; }
    .right label { display: flex; align-items: center; gap: 8px; margin: 0 2px; color: #000; }
    .right input[type="checkbox"] { appearance: none; width: 11px; height: 11px; margin: 0; border: 1px solid #999; background: #f4f4f4; }
    error-window { position: absolute; left: 77px; top: 197px; bottom: 0; width: 610px;
      font-family: "Noto Sans CJK SC", sans-serif; }
    .score { position: absolute; right: -34px; top: 608px; width: 58px; height: 58px; }
  `;

  private spinner(value: string, name: string, wide = false) {
    return html`<span class=${classMap({ spin: true, wide })}>
      <input aria-label=${name} .value=${value} />
      <svg width="5" height="15" viewBox="0 0 5 15"><path d="M0 3l2.500-3L5 3zM0 12h5l-2.500 3z" fill="#666" /></svg>
    </span>`;
  }

  render() {
    return html`
      <div class="title"><span class="logo"></span><span>广联达BIM钢筋算量软件 GGJ2013  -  [C:\\Users\\Administrator\\Desktop\\春露合作社.GGJ12]</span></div>
      <nav class="menu">
        ${MENU.map((m) => html`<a href="#">${m}</a>`)}
        <a href="#" class="helper"><svg width="16" height="16" viewBox="0 0 16 16">${ICONS.mascot}</svg>广小二</a>
        <span class="account">
          <span class="fade"></span>
          <svg width="16" height="16" viewBox="0 0 16 16">${ICONS.user}</svg><a href="#">登录</a><a href="#">造价</a>
        </span>
      </nav>
      ${ROWS.map((bars) => html`<tool-strip .bars=${bars}></tool-strip>`)}
      <model-view></model-view>
      <footer class="status">
        <div class="left">
          <span class="grip"></span>
          <button class="ortho"><svg width="16" height="16" viewBox="0 0 16 16">${ICONS.ortho}</svg>正交</button>
          <button class="snap" aria-label="捕捉"><svg width="16" height="16" viewBox="0 0 16 16">${ICONS.snap}</svg></button>
        </div>
        <div class="right">
          ${this.spinner("0", "偏移")}<span>mm</span><span class="vr"></span>
          <label><input type="checkbox" />旋转</label>
          ${this.spinner("0.000", "旋转角度", true)}<span>°</span>
        </div>
      </footer>
      <error-window></error-window>
      <svg class="score" viewBox="0 0 58 58" role="img" aria-label="9">
        <circle cx="29" cy="29" r="28" fill="#2b3040" stroke="#555a66" stroke-width="2" />
        <path d="M18 7A25 25 0 0 0 4 26" fill="none" stroke="#e0607a" stroke-width="2" />
        <path d="M4 26A25 25 0 0 0 24 53" fill="none" stroke="#d9a441" stroke-width="2" />
        <text x="11" y="37" font-size="23" fill="#e6e8ee">9</text>
      </svg>`;
  }
}
